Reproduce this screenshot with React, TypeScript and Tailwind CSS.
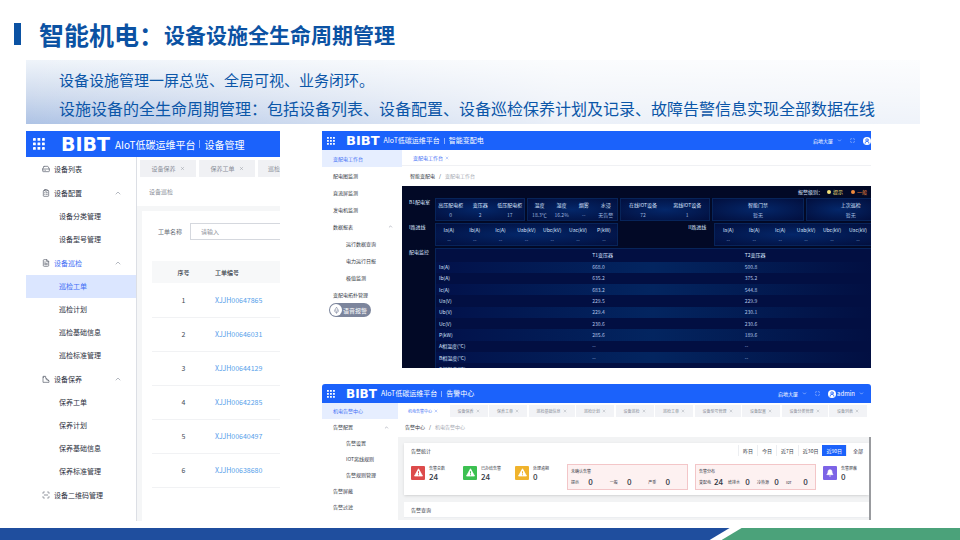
import type { ReactNode } from 'react';
import {
  Bell,
  ChevronDown,
  ChevronUp,
  ClipboardList,
  FileText,
  HardDrive,
  Maximize,
  Mic,
  ScanLine,
  UserRound,
  X,
} from 'lucide-react';

type MenuItem = {
  label: string;
  level?: number;
  open?: boolean;
  active?: boolean;
  current?: boolean;
  icon?: ReactNode;
};

const deviceMenu: MenuItem[] = [
  { label: '设备列表', icon: <HardDrive size={8} strokeWidth={2} /> },
  { label: '设备配置', open: true, icon: <ClipboardList size={8} strokeWidth={2} /> },
  { label: '设备分类管理', level: 1 },
  { label: '设备型号管理', level: 1 },
  { label: '设备巡检', open: true, current: true, icon: <FileText size={8} strokeWidth={2} /> },
  { label: '巡检工单', level: 1, active: true },
  { label: '巡检计划', level: 1 },
  { label: '巡检基础信息', level: 1 },
  { label: '巡检标准管理', level: 1 },
  { label: '设备保养', open: true, icon: <MaintainIcon /> },
  { label: '保养工单', level: 1 },
  { label: '保养计划', level: 1 },
  { label: '保养基础信息', level: 1 },
  { label: '保养标准管理', level: 1 },
  { label: '设备二维码管理', icon: <ScanLine size={8} strokeWidth={2} /> },
];

const powerMenu: MenuItem[] = [
  { label: '变配电工作台', active: true },
  { label: '配电图监测' },
  { label: '直流屏监测' },
  { label: '发电机监测' },
  { label: '数据报表', open: true },
  { label: '运行数据查询', level: 1 },
  { label: '电力运行日报', level: 1 },
  { label: '极值监测', level: 1 },
  { label: '变配电拓扑管理' },
];

const alarmMenu: MenuItem[] = [
  { label: '机电告警中心', active: true },
  { label: '告警配置', open: true },
  { label: '告警设置', level: 1 },
  { label: 'IOT离线规则', level: 1 },
  { label: '告警规则管理', level: 1 },
  { label: '告警屏蔽' },
  { label: '告警过滤' },
];

const orders = [
  'XJJH00647865',
  'XJJH00646031',
  'XJJH00644129',
  'XJJH00642285',
  'XJJH00640497',
  'XJJH00638680',
];

const alarmTabs = [
  '设备保养',
  '保养工单',
  '巡检基础信息',
  '巡检计划',
  '设备巡检',
  '巡检工单',
  '设备型号管理',
  '设备配置',
  '设备分类管理',
  '设备列表',
];

const readings = [
  ['Ia(A)', '668.0', '500.8'],
  ['Ib(A)', '635.2', '375.2'],
  ['Ic(A)', '683.2', '544.8'],
  ['Ua(V)', '229.5', '229.9'],
  ['Ub(V)', '229.4', '230.1'],
  ['Uc(V)', '230.6', '230.6'],
  ['P(kW)', '285.6', '189.6'],
  ['A相温度(°C)', '--', '--'],
  ['B相温度(°C)', '--', '--'],
  ['C相温度(°C)', '--', '--'],
];

const phases = ['Ia(A)', 'Ib(A)', 'Ic(A)', 'Uab(kV)', 'Ubc(kV)', 'Uac(kV)', 'P(kW)'];

function MaintainIcon() {
  return (
    <svg width="8" height="8" viewBox="0 0 24 24" fill="none" stroke="currentColor" strokeWidth="2">
      <path d="M3 22V4h8v4l10 9v5z" />
      <path d="M3 9l4-5M11 8l2 6 8 3" />
    </svg>
  );
}

function WarnIcon() {
  return (
    <svg width="9" height="9" viewBox="0 0 18 18">
      <path d="M9 1.5 17 16H1z" fill="white" stroke="white" strokeWidth="1.5" strokeLinejoin="round" />
      <path d="M9 6.5v4.5M9 12.5v2" stroke="currentColor" strokeWidth="2" />
    </svg>
  );
}

function AppsIcon({ className }: { className: string }) {
  return (
    <svg className={className} viewBox="0 0 12 12" fill="currentColor">
      {[0, 4.5, 9].map((y) =>
        [0, 4.5, 9].map((x) => <rect key={`${x}-${y}`} x={x} y={y} width="2.8" height="2.8" rx="0.4" />)
      )}
    </svg>
  );
}

function Avatar() {
  return (
    <span className="flex size-2 items-center justify-center rounded-full bg-white text-[#1b62fb]">
      <UserRound size={6} strokeWidth={3} />
    </span>
  );
}

function SmallHeader({ title, user, logo }: { title: string; user?: string; logo: string }) {
  return (
    <header className="flex h-[19px] items-center bg-[#1b62fb] pl-[5px] text-[7px] text-white">
      <button aria-label="应用" className="mr-[11px]">
        <AppsIcon className="size-2" />
      </button>
      <span className={`${logo} mr-1 font-['DejaVu_Sans'] font-bold leading-none`}>BIBT</span>
      <span>AIoT低碳运维平台</span>
      <span className="mx-1 h-[6px] w-px bg-white/50" />
      <span>{title}</span>
      <div className="ml-auto flex items-center text-[5px]">
        <span>启地大厦</span>
        <ChevronDown size={5} className="ml-1" />
        <Maximize size={5} className="mx-2 opacity-80" />
        <Avatar />
        {user && (
          <span className="mr-[7px] flex items-center gap-1 pl-px text-[6px]">
            {user}
            <ChevronDown size={5} />
          </span>
        )}
      </div>
    </header>
  );
}

function SmallMenu({ items, row }: { items: MenuItem[]; row: string }) {
  return (
    <ul className="text-[5px] text-[#333844]">
      {items.map((item) => (
        <li key={item.label} className={item.active ? 'bg-[#e6eeff] text-[#3f6ff5]' : ''}>
          <a href="#" className={`${row} flex items-center justify-between pr-[9px] ${item.level ? 'pl-6' : 'pl-[11px]'}`}>
            {item.label}
            {item.open && <ChevronUp size={5} className="text-gray-500" />}
          </a>
        </li>
      ))}
    </ul>
  );
}

function DevicePanel() {
  return (
    <section className="min-w-0 overflow-hidden bg-white">
      <header className="flex h-[26px] items-center whitespace-nowrap bg-[#1b62fb] pl-[7px] text-[10px] text-white">
        <button aria-label="应用" className="mr-4">
          <AppsIcon className="size-3" />
        </button>
        <span className="mr-[5px] font-['DejaVu_Sans'] text-[19px] font-bold leading-none">BIBT</span>
        <span>AIoT低碳运维平台</span>
        <span className="mx-1 h-2 w-px bg-white/50" />
        <span>设备管理</span>
      </header>

      <div className="flex h-[364px]">
        <nav className="w-[111px] shrink-0 border-r border-[#dcdfe5]">
          <ul className="text-[7px] text-[#2b3040]">
            {deviceMenu.map((item) => (
              <li
                key={item.label}
                className={item.active ? 'bg-[#dbe6ff] text-[#3f6ff5]' : item.current ? 'text-[#3f6ff5]' : ''}
              >
                <a
                  href="#"
                  className={`flex items-center ${item.level ? 'h-[23px] pl-[33px]' : 'h-6 gap-1 pl-4'}`}
                >
                  {item.icon && <span className="text-[#555b68]">{item.icon}</span>}
                  {item.label}
                  {item.open && <ChevronUp size={8} strokeWidth={1.5} className="ml-auto mr-[14px] text-gray-500" />}
                </a>
              </li>
            ))}
          </ul>
        </nav>

        <div className="flex min-w-0 flex-1 flex-col overflow-hidden bg-[#f5f6f7] text-[6px]">
          <div className="flex gap-[3px] bg-white pl-[3px] pt-[3px] text-[#8a8f99]">
            {['设备保养', '保养工单'].map((tab) => (
              <button key={tab} className="flex h-[17px] w-[56px] shrink-0 items-center justify-center gap-1 bg-[#f0f1f4]">
                {tab}
                <X size={5} />
              </button>
            ))}
            <button className="flex h-[17px] min-w-0 flex-1 items-center justify-end bg-[#f0f1f4]">巡检</button>
          </div>
          <p className="bg-white py-[9px] pl-3 leading-[11px] text-[#8a8f99]">设备巡检</p>
          <div className="ml-[5px] mt-[5px] flex-1 bg-white pl-[10px] pt-3">
            <div className="flex items-center pl-[6px]">
              <label htmlFor="order-name" className="mr-2 shrink-0 text-[#666b75]">
                工单名称
              </label>
              <input
                id="order-name"
                placeholder="请输入"
                className="h-[17px] min-w-0 flex-1 border border-r-0 border-[#d5d8de] pl-[10px] placeholder:text-[#8a8f99]"
              />
            </div>
            <table className="mt-[21px] w-full text-[7px]">
              <thead>
                <tr className="h-[22px] bg-[#f7f8f9] text-[6px] text-[#333844]">
                  <th className="w-[63px] font-medium">序号</th>
                  <th className="text-left font-medium">工单编号</th>
                </tr>
              </thead>
              <tbody>
                {orders.map((order, i) => (
                  <tr key={order} className="h-[34px] border-b border-[#f1f2f4]">
                    <td className="text-center text-[#444a55]">{i + 1}</td>
                    <td>
                      <a href="#" className="text-[#55a0ea]">
                        {order}
                      </a>
                    </td>
                  </tr>
                ))}
              </tbody>
            </table>
          </div>
        </div>
      </div>
    </section>
  );
}

function StatBox({ items, className = '' }: { items: string[][]; className?: string }) {
  return (
    <dl
      className={`flex h-[23px] min-w-0 items-center justify-around border border-[#07245a] bg-radial from-[#04276a] to-[#020f3e] text-center leading-[10px] ${className}`}
    >
      {items.map(([name, value]) => (
        <div key={name} className="flex-1">
          <dt className="whitespace-nowrap text-[#dbe6ff]">{name}</dt>
          <dd className="text-[#9db4dd]">{value}</dd>
        </div>
      ))}
    </dl>
  );
}

function PowerPanel() {
  return (
    <section className="overflow-hidden bg-white">
      <SmallHeader title="智能变配电" logo="text-[13px]" />
      <div className="flex">
        <nav className="w-20 shrink-0">
          <SmallMenu items={powerMenu} row="h-[17px]" />
          <button className="ml-[7px] flex h-[14px] items-center gap-px rounded-full bg-[#7c859c] pl-px pr-1 text-[6px] text-white">
            <span className="flex size-3 items-center justify-center rounded-full bg-white text-[#7c859c]">
              <Mic size={7} />
            </span>
            语音报警
          </button>
        </nav>

        <div className="min-w-0 flex-1 text-[5px]">
          <div className="flex h-[16px] items-center border-b border-[#f0f1f4] pl-[11px]">
            <button className="flex items-center gap-[2px] text-[#3f6ff5]">
              变配电工作台
              <X size={4} />
            </button>
          </div>
          <p className="pl-2 leading-5 text-[#333844]">
            智能变配电<span className="mx-1">/</span>
            <span className="text-[#a5a9b2]">变配电工作台</span>
          </p>

          <div className="h-[182px] overflow-hidden bg-[#020926] text-[#dbe6ff]">
            <p className="flex h-3 items-center justify-end gap-1 pr-1">
              报警级别：
              <span className="flex items-center gap-[2px] text-[#f4e27a]">
                <i className="size-1 rounded-full bg-[#f4e27a]" />
                提示
              </span>
              <span className="ml-1 flex items-center gap-[2px] text-[#f08a3c]">
                <i className="size-1 rounded-full bg-[#f08a3c]" />
                一般
              </span>
            </p>

            <div className="grid grid-cols-[24px_90fr_90fr_90fr_91fr_65fr] gap-x-[2px] pl-[7px]">
              <span>B1配电室</span>
              <StatBox items={[['高压配电柜', '0'], ['变压器', '2'], ['低压配电柜', '17']]} />
              <StatBox items={[['温度', '18.3℃'], ['湿度', '16.2%'], ['烟雾', '--'], ['水浸', '无告警']]} />
              <StatBox items={[['在线IOT设备', '72'], ['离线IOT设备', '1']]} />
              <StatBox items={[['智能门禁', '暂无']]} />
              <StatBox className="border-r-0 pl-6" items={[['上次巡检', '暂无']]} />
            </div>

            <div className="mt-[2px] grid grid-cols-[24px_182fr_92fr_156fr] gap-x-[2px] pl-[7px]">
              <span>I路进线</span>
              <StatBox items={phases.map((name) => [name, '--'])} />
              <span className="pr-[6px] text-right">II路进线</span>
              <StatBox className="border-r-0" items={phases.slice(0, 6).map((name) => [name, '--'])} />
            </div>

            <div className="mt-[2px] grid grid-cols-[24px_1fr] gap-x-[2px] pl-[7px]">
              <span>配电监控</span>
              <table className="h-[128px] w-full table-fixed border border-r-0 border-[#07245a] bg-[#020f42] text-left leading-[10px]">
                <thead>
                  <tr className="h-[13px]">
                    <th className="w-[36%]" />
                    <th className="w-[35%] font-normal">T1变压器</th>
                    <th className="font-normal">T2变压器</th>
                  </tr>
                </thead>
                <tbody>
                  {readings.map(([name, t1, t2]) => (
                    <tr key={name} className="odd:bg-linear-to-r odd:from-[#02114a] odd:via-[#032560] odd:to-[#020f42]">
                      <td className="pl-[3px]">{name}</td>
                      <td className="text-[#b5c6e8]">{t1}</td>
                      <td className="text-[#b5c6e8]">{t2}</td>
                    </tr>
                  ))}
                </tbody>
              </table>
            </div>
          </div>
        </div>
      </div>
    </section>
  );
}

function AlarmStat({ color, label, value, icon }: { color: string; label: string; value: string; icon: ReactNode }) {
  return (
    <div className="flex items-center gap-1">
      <span className={`${color} flex size-[14px] items-center justify-center rounded-[1px]`}>{icon}</span>
      <p>
        <span className="block whitespace-nowrap leading-[8px]">{label}</span>
        <b className="block text-[8px] font-medium leading-[9px]">{value}</b>
      </p>
    </div>
  );
}

function PinkBox({ title, cols, items }: { title: string; cols: string; items: string[][] }) {
  return (
    <div className="h-[26px] flex-1 border border-[#f3c6c8] bg-[#fdf1f1] pl-[3px] pt-px">
      <p className="leading-[10px]">{title}</p>
      <dl className={`grid leading-[12px] ${cols}`}>
        {items.map(([name, value]) => (
          <div key={name} className="flex items-center">
            <dt className="mr-[3px] min-w-3 whitespace-nowrap">{name}</dt>
            <dd className="min-w-[9px] text-center text-[8px] font-medium">{value}</dd>
          </div>
        ))}
      </dl>
    </div>
  );
}

function AlarmPanel() {
  return (
    <section className="overflow-hidden rounded-t-[3px] bg-white">
      <SmallHeader title="告警中心" user="admin" logo="text-[12px]" />
      <div className="flex h-[117px]">
        <nav className="w-[76px] shrink-0">
          <SmallMenu items={alarmMenu} row="h-4" />
        </nav>

        <div className="flex min-w-0 flex-1 flex-col text-[4px] text-[#333844]">
          <div className="flex justify-between pr-1 pt-[2px]">
            <button className="flex h-3 items-center gap-[2px] px-[10px] text-[#3f6ff5]">
              机电告警中心
              <X size={4} />
            </button>
            {alarmTabs.map((tab) => (
              <button key={tab} className="flex h-3 items-center gap-[2px] bg-[#f2f3f6] px-2 text-[#8a8f99]">
                {tab}
                <X size={4} />
              </button>
            ))}
          </div>
          <p className="pl-[7px] text-[5px] leading-5">
            告警中心<span className="mx-1">/</span>
            <span className="text-[#a5a9b2]">机电告警中心</span>
          </p>

          <div className="min-h-0 flex-1 overflow-hidden border-r-2 border-[#999b9f] bg-[#f2f3f4] pl-[6px] pt-[6px]">
            <div className="h-[52px] bg-white pl-[7px] pt-[2px] shadow-sm">
              <div className="flex items-center justify-between text-[5px]">
                <h3>告警统计</h3>
                <div className="flex h-[11px] items-stretch">
                  {['昨日', '今日', '近7日', '近30日', '近90日', '全部'].map((range) => (
                    <button
                      key={range}
                      className={
                        range === '近90日'
                          ? 'bg-[#1b62fb] px-1 text-white'
                          : 'border-l border-[#eceef1] px-1 last:px-[6px]'
                      }
                    >
                      {range}
                    </button>
                  ))}
                </div>
              </div>

              <div className="mt-2 flex items-start">
                <div className="grid w-[156px] grid-cols-3">
                  <AlarmStat
                    color="bg-[#dd4b4b] text-[#dd4b4b]"
                    label="告警总数"
                    value="24"
                    icon={<WarnIcon />}
                  />
                  <AlarmStat
                    color="bg-[#3cc051] text-[#3cc051]"
                    label="已办结告警"
                    value="24"
                    icon={<WarnIcon />}
                  />
                  <AlarmStat
                    color="bg-[#f0b32c] text-[#f0b32c]"
                    label="处理逾期"
                    value="0"
                    icon={<WarnIcon />}
                  />
                </div>
                <div className="flex flex-1 gap-[7px] pr-[7px]">
                  <PinkBox
                    title="未确认告警"
                    cols="grid-cols-3"
                    items={[['提示', '0'], ['一般', '0'], ['严重', '0']]}
                  />
                  <PinkBox
                    title="告警分布"
                    cols="grid-cols-4"
                    items={[['变配电', '24'], ['给排水', '0'], ['冷热源', '0'], ['IoT', '0']]}
                  />
                </div>
                <div className="pr-3">
                  <AlarmStat
                    color="bg-[#7c63e6] text-white"
                    label="告警屏蔽"
                    value="0"
                    icon={<Bell size={8} fill="currentColor" />}
                  />
                </div>
              </div>
            </div>
            <div className="mt-[7px] bg-white">
              <h3 className="border-b border-[#eceef1] pl-[7px] text-[5px] leading-[15px]">告警查询</h3>
            </div>
          </div>
        </div>
      </div>
    </section>
  );
}

export default function App() {
  return (
    <main className="flex min-h-screen flex-col bg-white font-['Noto_Sans_CJK_SC',sans-serif]">
      <h1 className="flex items-center pl-[14px] pt-4 font-bold leading-9 text-[#0b52a3]">
        <span className="mr-[18px] h-[22px] w-[7px] bg-[#0b52a3]" />
        <span className="text-[25px]">智能机电：</span>
        <span className="text-[21px]">设备设施全生命周期管理</span>
      </h1>

      <div className="ml-[26px] mr-10 mt-2 bg-[linear-gradient(to_right,transparent,rgba(255,255,255,0.75)_60%,rgba(255,255,255,0.8)),linear-gradient(to_bottom,#eff4fa,#cfdbee_55%,#aec3e5)] pb-[2px] pl-[33px] pt-[6px] text-base leading-7 text-[#0b56a8]">
        <p className="text-[15px]">设备设施管理一屏总览、全局可视、业务闭环。</p>
        <p>设施设备的全生命周期管理：包括设备列表、设备配置、设备巡检保养计划及记录、故障告警信息实现全部数据在线</p>
      </div>

      <div className="mb-[7px] ml-[26px] mr-[89px] mt-[7px] grid grid-cols-[254fr_549fr] items-start gap-x-[42px]">
        <DevicePanel />
        <div className="flex min-w-0 flex-col gap-4">
          <PowerPanel />
          <AlarmPanel />
        </div>
      </div>

      <footer className="mt-auto flex h-3">
        <div className="w-[76%] bg-[#1f4e9e] [clip-path:polygon(0_0,100%_0,calc(100%-20px)_100%,0_100%)]" />
        <div className="-ml-2 flex-1 bg-[#4ba27a] [clip-path:polygon(20px_0,100%_0,100%_100%,0_100%)]" />
      </footer>
    </main>
  );
}
